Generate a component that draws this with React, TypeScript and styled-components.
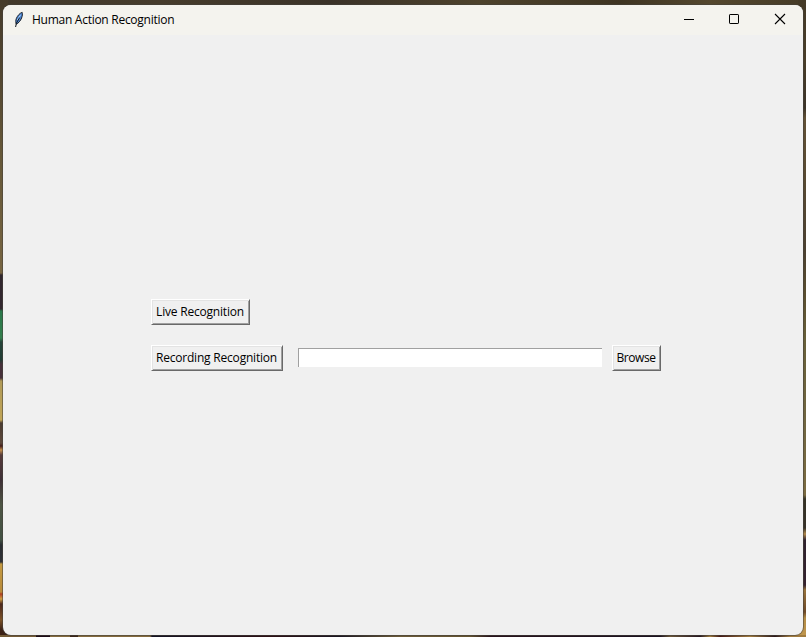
import React from "react";
import styled, { createGlobalStyle } from "styled-components";

const GlobalStyle = createGlobalStyle`
  * { box-sizing: border-box; }
  html, body { margin: 0; height: 100%; overflow: hidden; }
  body { font-family: "Open Sans", "Noto Sans", sans-serif; font-size: 12px; color: #000; }
`;

const Desktop = styled.div`
  width: 806px;
  height: 637px;
  padding: 5px 3px 2px;
  background:
    linear-gradient(90deg, #735a35 0 36px, #1c0b15 36px 50px, #846a3e 50px 70px, #3b2518 70px 78px, #846a3e 78px 150px, #151424 152px, #2c1015 270px, #1b1722 340px, #6c5b38 400px, #63522f 470px, #28131c 490px, #1b1220 660px, #6b5638 670px, #251620 700px, #a17d3e 710px, #431713 720px, #a17b3f 750px, #2b1719 775px, #a17b3f 790px) 0 635px / 806px 2px no-repeat,
    linear-gradient(180deg, #463b2a 0, #524631 70px, #655738 150px, #776542 273px, #31272e 275px, #31272e 309px, #2a774a 311px, #347e4d 338px, #26443a 342px, #213c34 360px, #46313a 364px, #46313a 378px, #b09a58 381px, #c1a557 420px, #4b3c32 423px, #5d493c 443px, #451c18 446px, #c28e4d 450px, #563b3b 455px, #3e3036 480px, #4e5544 505px, #425143 540px, #292d31 545px, #303236 562px, #c49a42 564px, #b98b3b 592px, #ae3c20 594px, #d0a044 599px, #4d281d 604px, #7b5228 620px, #3b2015 630px) 0 0 / 8px 637px no-repeat,
    linear-gradient(180deg, #443a27 0, #493d29 60px, #3b3328 108px, #625136 118px, #5a4b32 170px, #4b4030 250px, #5a4e2f 295px, #686039 340px, #716641 430px, #7b6b41 495px, #353225 499px, #373229 528px, #b1894b 534px, #30222e 540px, #35222f 585px, #98733c 590px, #6d4928 612px, #b38c46 618px, #c1974e 637px) 798px 0 / 8px 637px no-repeat,
    linear-gradient(90deg, #42392b, #463c2c 160px, #3a3228 330px, #4d422c 480px, #3e3422 620px, #54472e 710px, #453b27);
`;

const Window = styled.main`
  height: 630px;
  display: flex;
  flex-direction: column;
  border-radius: 8px;
  overflow: hidden;
  background: #f0f0f0;
  box-shadow: 0 0 0 1px rgba(70, 66, 60, 0.55);
`;

const TitleBar = styled.header`
  flex: 0 0 30px;
  display: flex;
  align-items: center;
  padding-left: 8px;
  background: #f4f3ee;
`;

const Title = styled.h1`
  flex: 1;
  margin: 0 0 0 5px;
  font-size: 12px;
  font-weight: 400;
  line-height: 16px;
  letter-spacing: -0.27px;
`;

const CaptionButton = styled.button<{ $width: number }>`
  width: ${(p) => p.$width}px;
  height: 30px;
  padding: 0 0 2px;
  border: 0;
  background: transparent;
  display: flex;
  align-items: center;
  justify-content: center;
`;

const Content = styled.section`
  display: grid;
  justify-items: start;
  gap: 20px;
  padding: 264px 0 0 148px;
`;

const FileRow = styled.div`
  display: flex;
  align-items: center;
`;

const RaisedButton = styled.button<{ $width: number; $spacing: number }>`
  width: ${(p) => p.$width}px;
  height: 26px;
  padding: 0 1px 1px 0;
  border: 1px solid;
  border-color: #fff #696969 #696969 #fff;
  border-radius: 0;
  background: #f0f0f0;
  box-shadow: inset 1px 1px #e3e3e3, inset -1px -1px #a0a0a0;
  color: #000;
  font: 12px/16px "Open Sans", "Noto Sans", sans-serif;
  letter-spacing: ${(p) => p.$spacing}px;
  white-space: nowrap;
`;

const PathEntry = styled.input`
  width: 304px;
  height: 19px;
  margin: 0 10px 1px 15px;
  padding: 0 3px;
  border: 0 solid #a0a0a0;
  border-width: 1px 0 0 1px;
  border-radius: 0;
  outline: none;
  background: #fff;
  font: inherit;
`;

const Feather = () => (
  <svg width="16" height="18" viewBox="0 0 16 18" aria-hidden="true">
    <path d="M11.2 1.4C8.8 2 6.4 4.8 5.3 7.6C4.6 9.6 4.6 11.4 5.3 13.2C7.4 12.2 9.5 9.8 10.6 7C11.4 4.8 11.6 3 11.2 1.4Z" fill="#4a86d6" stroke="#1b1f27" />
    <path d="M9.6 3.8L6.4 9" stroke="#a9d0f8" />
    <path d="M8.6 6.6L5.4 12.2L4.6 16" fill="none" stroke="#111820" />
  </svg>
);

export default function App() {
  return (
    <>
      <GlobalStyle />
      <Desktop>
        <Window>
          <TitleBar>
            <Feather />
            <Title>Human Action Recognition</Title>
            <CaptionButton $width={45} aria-label="Minimize">
              <svg width="11" height="12"><path d="M1 6.5H11" stroke="#000" /></svg>
            </CaptionButton>
            <CaptionButton $width={46} aria-label="Maximize">
              <svg width="12" height="12"><rect x="1.5" y="1.5" width="9" height="9" rx="0.6" fill="none" stroke="#000" /></svg>
            </CaptionButton>
            <CaptionButton $width={46} aria-label="Close">
              <svg width="12" height="12"><path d="M1 1L11 11M11 1L1 11" stroke="#000" strokeWidth="1.1" /></svg>
            </CaptionButton>
          </TitleBar>
          <Content>
            <RaisedButton $width={99} $spacing={-0.2}>Live Recognition</RaisedButton>
            <FileRow>
              <RaisedButton $width={132} $spacing={-0.2}>Recording Recognition</RaisedButton>
              <PathEntry aria-label="Recording path" />
              <RaisedButton $width={49} $spacing={-0.4}>Browse</RaisedButton>
            </FileRow>
          </Content>
        </Window>
      </Desktop>
    </>
  );
}
